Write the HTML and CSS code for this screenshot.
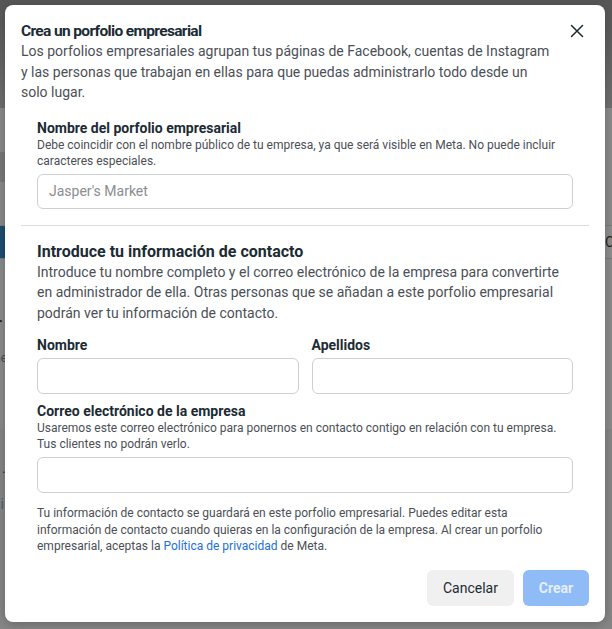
FILE: index.html
```html
<!DOCTYPE html>
<html lang="es">
<head>
<meta charset="utf-8">
<title>Crea un porfolio empresarial</title>
<link rel="stylesheet" href="styles.css">
</head>
<body>
<div class="backdrop">
  <div class="bg-top"></div>
  <div class="bg-band bg-grey1"><div class="bg-block"></div></div>
  <div class="bg-band bg-tabs"><div class="bg-blue"></div><div class="bg-tab-rest"><span class="bg-c">C</span></div></div>
  <div class="bg-band bg-grey2"><span class="bg-text t1">r</span><span class="bg-text t2">ne</span></div>
  <div class="bg-band bg-grey3"><span class="bg-text t4">.</span><span class="bg-text t3">li</span></div>
</div>

<div class="modal" role="dialog" aria-labelledby="m-title">
  <button class="close" aria-label="Cerrar">
    <svg width="14" height="14" viewBox="0 0 14 14"><path d="M1.5 1.5 L12.5 12.5 M12.5 1.5 L1.5 12.5" stroke="#1c2b33" stroke-width="1.5" stroke-linecap="round"/></svg>
  </button>
  <h1 id="m-title" class="title">Crea un porfolio empresarial</h1>
  <p class="desc desc-top">Los porfolios empresariales agrupan tus páginas de Facebook, cuentas de Instagram y las personas que trabajan en ellas para que puedas administrarlo todo desde un solo lugar.</p>

  <div class="section section-first">
    <label class="label">Nombre del porfolio empresarial</label>
    <p class="hint">Debe coincidir con el nombre público de tu empresa, ya que será visible en Meta. No puede incluir caracteres especiales.</p>
    <input class="field" type="text" placeholder="Jasper's Market">
  </div>

  <hr class="divider">

  <div class="section">
    <h2 class="subtitle">Introduce tu información de contacto</h2>
    <p class="desc">Introduce tu nombre completo y el correo electrónico de la empresa para convertirte en administrador de ella. Otras personas que se añadan a este porfolio empresarial podrán ver tu información de contacto.</p>

    <div class="names">
      <div class="col">
        <label class="label">Nombre</label>
        <input class="field" type="text">
      </div>
      <div class="col">
        <label class="label">Apellidos</label>
        <input class="field" type="text">
      </div>
    </div>

    <div class="email">
      <label class="label">Correo electrónico de la empresa</label>
      <p class="hint">Usaremos este correo electrónico para ponernos en contacto contigo en relación con tu empresa. Tus clientes no podrán verlo.</p>
      <input class="field" type="text">
    </div>

    <p class="legal">Tu información de contacto se guardará en este porfolio empresarial. Puedes editar esta información de contacto cuando quieras en la configuración de la empresa. Al crear un porfolio empresarial, aceptas la <a href="#">Política de privacidad</a> de Meta.</p>
  </div>

  <div class="actions">
    <button class="btn btn-cancel">Cancelar</button>
    <button class="btn btn-create" disabled>Crear</button>
  </div>
</div>
</body>
</html>
```

FILE: styles.css
```css
* { box-sizing: border-box; }

html, body {
  margin: 0;
  padding: 0;
  width: 612px;
  height: 629px;
  overflow: hidden;
  font-family: Roboto, "Liberation Sans", Arial, sans-serif;
}

.backdrop {
  width: 612px;
  height: 629px;
  display: flex;
  flex-direction: column;
  background: #8a8a8a;
}

.bg-top {
  height: 108px;
  background: linear-gradient(180deg, #575757 0%, #666 60%, #707070 100%);
}

.bg-band { display: flex; }

.bg-grey1 {
  height: 117px;
  background: #8b8b8b;
  align-items: center;
}
.bg-block {
  width: 6px;
  height: 30px;
  background: #7a7a7a;
}

.bg-tabs {
  height: 34px;
  background: #8e8e8e;
  border-top: 1px solid #7c7c7c;
  border-bottom: 1px solid #7c7c7c;
}
.bg-blue { width: 10px; background: #1f4e72; }
.bg-tab-rest { flex: 1; display: flex; justify-content: flex-end; align-items: center; }
.bg-c { color: #222; font-size: 14px; margin-right: -2px; }

.bg-grey2 {
  height: 170px;
  background: #8c8c8c;
  flex-direction: column;
  padding-top: 56px;
}
.bg-text { color: #3a3a3a; font-size: 14px; line-height: 18px; }
.t1 { font-weight: 700; font-size: 16px; margin-left: -4px; color: #262626; }
.t2 { margin-top: 16px; color: #4e4e4e; font-size: 12px; margin-left: -6px; }

.bg-grey3 {
  flex: 1;
  background: #878787;
  flex-direction: column;
  padding-top: 30px;
}
.t4 { margin-left: 2px; color: #333; }
.t3 { margin-top: 18px; color: #52606d; font-size: 14px; margin-left: -3px; }

.modal {
  position: absolute;
  left: 5px;
  top: 5px;
  width: 600px;
  height: 617px;
  background: #fff;
  border-radius: 8px;
  box-shadow: 0 2px 12px rgba(0, 0, 0, 0.25);
  padding: 16px;
  color: #1c2b33;
  display: flex;
  flex-direction: column;
}

.close {
  position: absolute;
  right: 16px;
  top: 14px;
  width: 24px;
  height: 24px;
  border: 0;
  padding: 0;
  background: transparent;
  display: flex;
  align-items: center;
  justify-content: center;
}

.title {
  margin: 0;
  font-size: 15.5px;
  font-weight: 700;
  letter-spacing: -0.65px;
  line-height: 20px;
  color: #1c2b33;
}

.desc {
  margin: 0;
  font-size: 14px;
  line-height: 20.5px;
  color: #4b4f56;
}
.desc-top { padding-right: 36px; }

.section { padding: 0 16px; }
.section-first { margin-top: 16px; }

.label {
  display: block;
  font-size: 14px;
  font-weight: 700;
  line-height: 18px;
  color: #1c2b33;
}

.hint {
  margin: 0;
  font-size: 12px;
  line-height: 16px;
  color: #4b4f56;
}

.field {
  display: block;
  width: 100%;
  height: 35px;
  margin-top: 5px;
  border: 1px solid #ccd0d5;
  border-radius: 6px;
  padding: 0 11px;
  font-family: inherit;
  font-size: 14px;
  color: #1c2b33;
  background: #fff;
  outline: none;
}
.field::placeholder { color: #8a8d91; }

.divider {
  border: 0;
  border-top: 1px solid #dadde1;
  margin: 16px 0;
}

.subtitle {
  margin: 0;
  font-size: 16px;
  font-weight: 700;
  line-height: 20px;
  color: #1c2b33;
}

.names {
  display: grid;
  grid-template-columns: 1fr 1fr;
  gap: 13px;
  margin-top: 13px;
}
.col .field { margin-top: 4px; height: 36px; }

.email { margin-top: 8px; }
.email .field { margin-top: 5px; height: 36px; }

.legal {
  margin: 12px 0 0;
  font-size: 12px;
  line-height: 16.5px;
  color: #4b4f56;
}
.legal a { color: #216fdb; text-decoration: none; }

.actions {
  display: flex;
  justify-content: flex-end;
  gap: 9px;
  margin-top: auto;
}

.btn {
  height: 36px;
  border: 0;
  border-radius: 6px;
  font-family: inherit;
  font-size: 14px;
  padding: 0 12px;
}
.btn-cancel {
  width: 87px;
  background: #f0f0f0;
  color: #1c2b33;
}
.btn-create {
  width: 66px;
  background: #8fbcf6;
  color: #e4efff;
  font-weight: 700;
}
```
